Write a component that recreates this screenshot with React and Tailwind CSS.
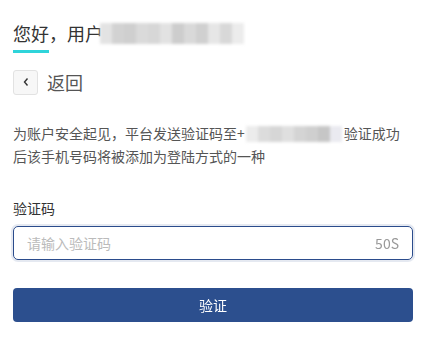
import React from 'react';

const cjk = { fontFamily: '"Noto Sans CJK SC", "Liberation Sans", sans-serif' };

// pixelated blur block standing in for masked personal data
const Masked = ({ shades, className = '' }) => (
    <span className={`inline-flex align-middle blur-[1.5px] ${className}`}>
        {shades.map((s, i) => (
            <span key={i} className="inline-block h-full w-[12px]" style={{ background: s }} />
        ))}
    </span>
);

const App = () => {
    return (
        <div className="w-[423px] h-[337px] bg-white pl-[13px] pr-[10px] overflow-hidden" style={cjk}>
            <div className="pt-[20px] flex flex-col items-start">
                <div className="flex items-center h-[26px] text-[18px] leading-[26px] text-[#333]">
                    <span>您好，用户</span>
                    <Masked
                        className="h-[21px] -ml-[3px]"
                        shades={['#e3e3e3', '#d2d2d2', '#cfcfcf', '#dadada', '#d7d7d7', '#e2e2e2', '#cdcdcd', '#d9d9d9', '#d0d0d0', '#e6e6e6', '#d8d8d8', '#ececec']}
                    />
                </div>
                <div className="mt-[4px] w-[36px] h-[3px] bg-[#2fd4da]" />
            </div>

            <div className="mt-[16px] flex items-center gap-[9px]">
                <button className="w-[25px] h-[25px] flex items-center justify-center rounded-[3px] border border-[#e2e2e2] bg-[#f7f7f7]">
                    <svg width="8" height="10" viewBox="0 0 8 10" fill="none">
                        <path d="M5.5 1.5 L2.5 5 L5.5 8.5" stroke="#333" strokeWidth="1.4" />
                    </svg>
                </button>
                <span className="text-[18px] leading-[26px] text-[#555]">返回</span>
            </div>

            <p className="mt-[27px] pr-[3px] text-[14px] leading-[23px] text-[#555]">
                为账户安全起见，平台发送验证码至+
                <Masked
                    className="h-[16px] w-[96px] ml-[1px] mr-[2px] -mt-[3px]"
                    shades={['#ececec', '#dcdcdc', '#d6d6d6', '#dfdfdf', '#d4d4d4', '#cfcfcf', '#c6c6c6', '#eaeaf0']}
                />
                验证成功后该手机号码将被添加为登陆方式的一种
            </p>

            <div className="mt-[30px] text-[14px] leading-[20px] text-[#333]">验证码</div>

            <div className="mt-[8px] h-[34px] flex items-center rounded-[5px] border border-[#2b4c8c] shadow-[0_0_0_2px_rgba(43,76,140,0.12)] px-[13px]">
                <input
                    className="flex-1 outline-none text-[14px] text-[#333] placeholder-[#bbb] bg-transparent caret-[#333]"
                    style={cjk}
                    placeholder="请输入验证码"
                    autoFocus
                />
                <span className="text-[14px] text-[#999]">50S</span>
            </div>

            <button
                className="mt-[28px] w-full h-[34px] rounded-[4px] bg-[#2c4f8e] text-white text-[14px]"
                style={cjk}
            >
                验证
            </button>
        </div>
    );
};

export default App;
